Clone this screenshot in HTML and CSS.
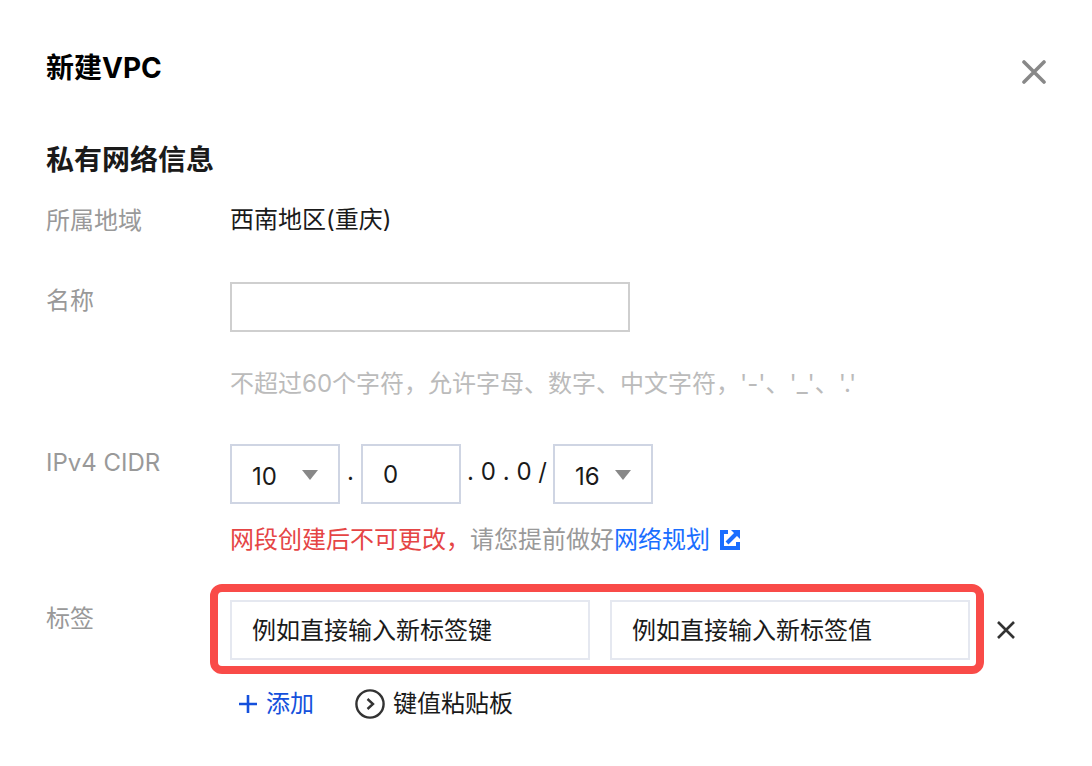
FILE: index.html
```html
<!DOCTYPE html>
<html lang="zh-CN">
<head>
  <meta charset="UTF-8" />
  <meta name="viewport" content="width=device-width, initial-scale=1" />
  <title>新建VPC</title>
  <link rel="stylesheet" href="styles.css">
</head>
<body>
  <div class="dialog">
    <header class="dialog-header">
      <h1 class="dialog-title">新建VPC</h1>
      <button type="button" class="icon-button" aria-label="关闭">
        <svg class="close-icon" viewBox="0 0 24 24"><path d="M2 2L22 22M22 2L2 22" /></svg>
      </button>
    </header>

    <form class="vpc-form">
      <h2 class="section-title">私有网络信息</h2>

      <div class="form-row">
        <span class="label">所属地域</span>
        <div class="field">西南地区(重庆)</div>
      </div>

      <div class="form-row">
        <label class="label" for="vpc-name">名称</label>
        <div class="field">
          <input type="text" id="vpc-name" class="name-input" />
          <p class="hint">不超过60个字符，允许字母、数字、中文字符，'-'、'_'、'.'</p>
        </div>
      </div>

      <div class="form-row">
        <label class="label" for="cidr-first">IPv4 CIDR</label>
        <div class="field">
          <div class="cidr">
            <div class="select-box select-first">
              <select id="cidr-first">
                <option>10</option>
                <option>172</option>
                <option>192</option>
              </select>
              <svg class="arrow" viewBox="0 0 16 10"><path d="M0 0H16L8 10Z" /></svg>
            </div>
            <span class="dot">.</span>
            <input type="text" class="cidr-input" value="0" aria-label="第二段" />
            <span class="cidr-rest"><span>.</span><span>0</span><span>.</span><span>0</span><span>/</span></span>
            <div class="select-box select-mask">
              <select aria-label="掩码">
                <option>16</option>
                <option>24</option>
                <option>28</option>
              </select>
              <svg class="arrow" viewBox="0 0 16 10"><path d="M0 0H16L8 10Z" /></svg>
            </div>
          </div>
          <p class="note"><span class="warning">网段创建后不可更改，</span>请您提前做好<a href="#" class="plan-link">网络规划<svg class="link-icon" viewBox="0 0 20 20"><path class="link-frame" d="M8 2H2V18H18V12" /><path class="link-arrow" d="M7 13L16 4" /><path class="link-head" d="M11 0H20V9Z" /></svg></a></p>
        </div>
      </div>

      <div class="form-row">
        <label class="label" for="tag-key">标签</label>
        <div class="field">
          <div class="tag-row">
            <div class="tag-inputs">
              <input type="text" id="tag-key" class="tag-input" placeholder="例如直接输入新标签键" />
              <input type="text" class="tag-input" placeholder="例如直接输入新标签值" aria-label="标签值" />
            </div>
            <button type="button" class="icon-button remove-button" aria-label="删除标签">
              <svg class="remove-icon" viewBox="0 0 20 20"><path d="M2 2L18 18M18 2L2 18" /></svg>
            </button>
          </div>
          <div class="tag-actions">
            <button type="button" class="text-button add-button">
              <svg class="plus-icon" viewBox="0 0 20 20"><path d="M1 10H19M10 1V19" /></svg>
              添加
            </button>
            <button type="button" class="text-button">
              <svg class="paste-icon" viewBox="0 0 30 30"><circle cx="15" cy="15" r="13.6" /><path d="M12.5 10L18 15L12.5 20" /></svg>
              键值粘贴板
            </button>
          </div>
        </div>
      </div>
    </form>
  </div>
</body>
</html>
```

FILE: styles.css
```css
* {
  box-sizing: border-box;
}

body {
  margin: 0;
  background: #fff;
  color: #1a1a1a;
  font-family: Inter, "Noto Sans CJK SC", sans-serif;
  font-size: 24px;
  line-height: 36px;
}

input,
select,
button {
  font: inherit;
  color: inherit;
  margin: 0;
  border-radius: 0;
}

svg {
  display: block;
  flex: none;
  fill: none;
}

.dialog {
  padding: 48px 46px 0;
}

.dialog-header {
  display: flex;
  justify-content: space-between;
  align-items: flex-start;
}

.dialog-title,
.section-title {
  margin: 0;
  font-size: 28px;
  font-weight: 700;
  line-height: 40px;
}

.dialog-title {
  color: #000;
}

.icon-button {
  display: flex;
  align-items: center;
  justify-content: center;
  padding: 0;
  border: 0;
  background: none;
  cursor: pointer;
}

.close-icon {
  width: 24px;
  height: 48px;
  stroke: #888;
  stroke-width: 3.6;
  stroke-linecap: round;
}

.section-title {
  margin: 44px 0 22px;
}

.vpc-form {
  display: flex;
  flex-direction: column;
}

.form-row {
  display: grid;
  grid-template-columns: 184px minmax(0, 1fr);
  margin-bottom: 42px;
}

.form-row:last-child {
  margin-bottom: 0;
}

.label {
  color: #999;
  line-height: 38px;
}

/* name */
.name-input {
  display: block;
  width: 400px;
  max-width: 100%;
  height: 50px;
  padding: 0 20px;
  border: 2px solid #cfcfcf;
}

.hint {
  margin: 34px 0 0;
  color: #bbb;
}

/* cidr */
.cidr {
  display: flex;
  height: 60px;
}

.select-box {
  position: relative;
}

.select-box select {
  width: 100%;
  height: 60px;
  padding: 6px 20px 0;
  border: 2px solid #cfd5e3;
  background: #fff;
  appearance: none;
}

.select-first {
  width: 110px;
}

.select-mask {
  width: 100px;
}

.arrow {
  position: absolute;
  top: 26px;
  right: 22px;
  width: 16px;
  height: 10px;
  fill: #888;
  pointer-events: none;
}

.dot {
  width: 21px;
  padding-top: 10px;
  text-align: center;
}

.cidr-input {
  width: 100px;
  height: 60px;
  padding: 0 20px;
  border: 2px solid #cfd5e3;
}

.cidr-rest {
  display: flex;
  justify-content: space-between;
  width: 92px;
  padding: 10px 6px 0;
}

.note {
  margin: 18px 0 0;
  color: #999;
}

.warning {
  color: #e54545;
}

.plan-link {
  color: #1a6eff;
  text-decoration: none;
}

.link-icon {
  display: inline-block;
  width: 20px;
  height: 20px;
  margin-left: 10px;
  vertical-align: -2px;
  stroke: #1a6eff;
  stroke-width: 4;
}

.link-head {
  fill: #1a6eff;
  stroke: none;
}

/* tags */
.tag-row {
  display: flex;
  gap: 18px;
  padding-right: 22px;
}

.tag-inputs {
  position: relative;
  display: flex;
  flex: 1;
  gap: 20px;
  min-width: 0;
}

/* red frame drawn round the two tag inputs */
.tag-inputs::after {
  content: "";
  position: absolute;
  inset: -16px -14px -14px -20px;
  border: 8px solid #f94b48;
  border-radius: 12px;
  pointer-events: none;
}

.tag-input {
  flex: 1;
  min-width: 0;
  height: 60px;
  padding: 0 20px;
  border: 2px solid #e5e8f0;
}

.tag-input::placeholder {
  color: #1a1a1a;
  opacity: 1;
}

.remove-button {
  width: 36px;
}

.remove-icon {
  width: 20px;
  height: 20px;
  stroke: #333;
  stroke-width: 2.6;
}

.tag-actions {
  display: flex;
  gap: 41px;
  margin-top: 26px;
  padding-left: 8px;
}

.text-button {
  display: flex;
  align-items: center;
  gap: 8px;
  padding: 0;
  border: 0;
  background: none;
  cursor: pointer;
}

.add-button {
  color: #1450dc;
}

.plus-icon {
  width: 20px;
  height: 20px;
  stroke: #1450dc;
  stroke-width: 2.6;
}

.paste-icon {
  width: 30px;
  height: 30px;
  stroke: #333;
  stroke-width: 2.4;
}
```
